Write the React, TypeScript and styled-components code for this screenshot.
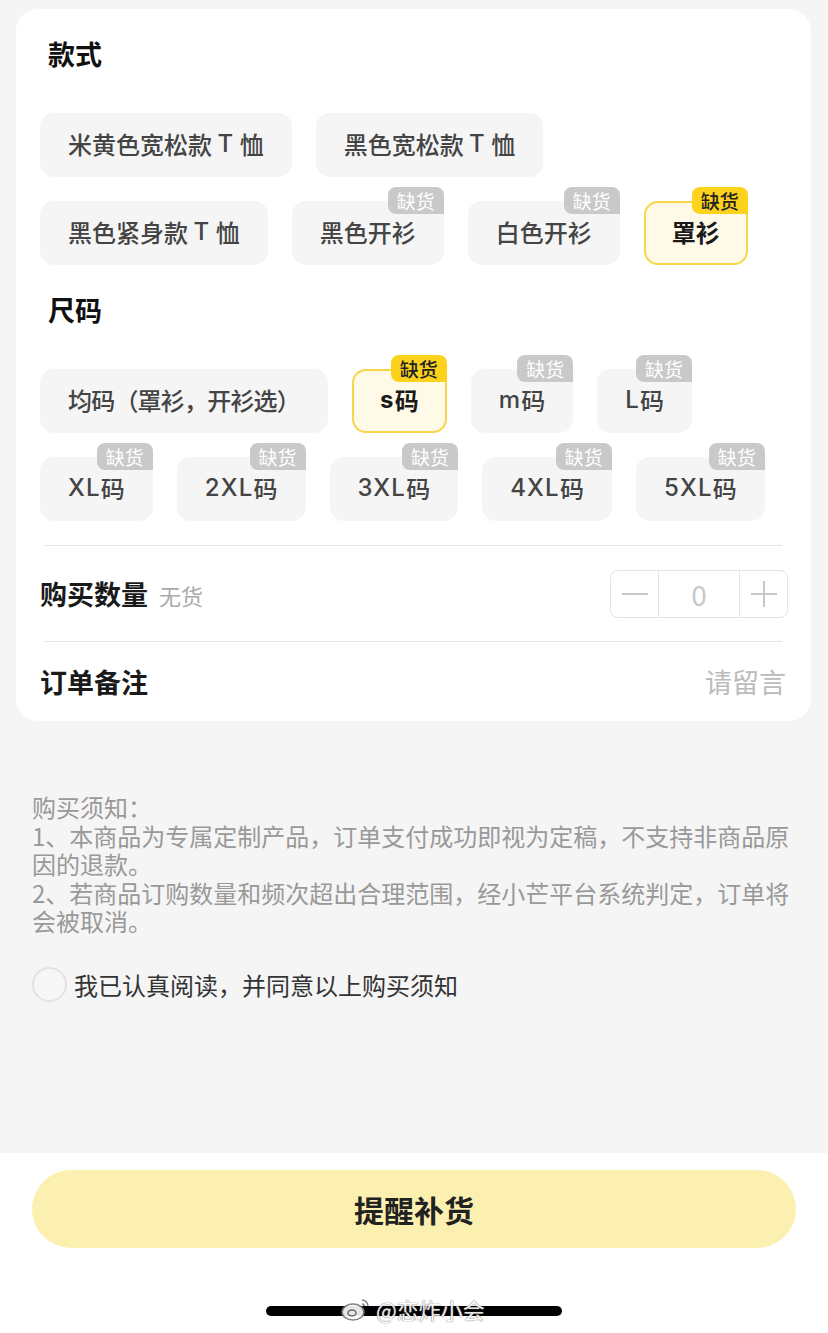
import React from 'react';
import styled, {createGlobalStyle} from 'styled-components';

const GlobalStyle = createGlobalStyle`
  html, body {
    margin: 0;
    padding: 0;
    background: #f5f5f5;
  }
  body {
    font-family: "Noto Sans CJK SC", "Noto Sans", "Liberation Sans", sans-serif;
  }
`;

const Page = styled.div`
  width: 828px;
  height: 1333px;
  display: flex;
  flex-direction: column;
  background: #f5f5f5;
  overflow: hidden;
`;

const Body = styled.div`
  flex: 0 0 1153px;
  padding: 9px 17px 0 16px;
  box-sizing: border-box;
`;

const Card = styled.div`
  background: #fff;
  border-radius: 22px;
  padding: 27px 24px 0;
`;

const SectionTitle = styled.div<{$gap?: number}>`
  margin: ${(p) => p.$gap ?? 0}px 0 0 8px;
  height: 36px;
  line-height: 36px;
  font-size: 27px;
  font-weight: 700;
  color: #111;
`;

const ChipGroup = styled.div`
  display: flex;
  flex-wrap: wrap;
  gap: 24px;
  margin-top: 41px;
`;

const Chip = styled.div<{$selected?: boolean; $tight?: boolean}>`
  position: relative;
  height: 64px;
  padding: 0 26px 3px;
  box-sizing: border-box;
  display: flex;
  align-items: center;
  border-radius: 14px;
  font-size: 24px;
  letter-spacing: ${(p) => (p.$tight ? '-0.8px' : '0')};
  background: ${(p) => (p.$selected ? '#fffae8' : '#f5f5f5')};
  border: 2px solid ${(p) => (p.$selected ? '#f6d64a' : 'transparent')};
  color: ${(p) => (p.$selected ? '#1a1a1a' : '#444')};
  font-weight: ${(p) => (p.$selected ? 700 : 500)};
  white-space: pre;
`;

const Latin = styled.span`
  font-family: Inter, "Noto Sans", sans-serif;
  letter-spacing: 1.2px;
`;

const Badge = styled.span<{$selected?: boolean}>`
  position: absolute;
  top: -16px;
  right: -2px;
  height: 27px;
  line-height: 27px;
  padding: 0 9px;
  border-radius: 8px 8px 0 8px;
  font-size: 19px;
  letter-spacing: 0;
  font-weight: ${(p) => (p.$selected ? 500 : 400)};
  background: ${(p) => (p.$selected ? '#fdd21c' : '#c9c9c9')};
  color: ${(p) => (p.$selected ? '#222' : '#fff')};
`;

const Divider = styled.div<{$top?: number}>`
  height: 1px;
  background: #e6e6e6;
  margin: ${(p) => p.$top ?? 0}px 5px 0 4px;
`;

const FormRow = styled.div<{$height: number}>`
  height: ${(p) => p.$height}px;
  display: flex;
  align-items: center;
  justify-content: space-between;
`;

const RowLabel = styled.div`
  display: flex;
  align-items: baseline;
  gap: 11px;
  font-size: 27px;
  font-weight: 700;
  color: #1a1a1a;
`;

const Hint = styled.span`
  font-size: 22px;
  font-weight: 400;
  color: #aaa;
`;

const Placeholder = styled.span`
  font-size: 27px;
  color: #bbb;
  margin-right: 1px;
`;

const Stepper = styled.div`
  display: flex;
  height: 48px;
  border: 1px solid #e4e4e4;
  border-radius: 8px;
  margin-right: -1px;
  box-sizing: border-box;
`;

const StepCell = styled.div<{$wide?: boolean}>`
  width: ${(p) => (p.$wide ? 80 : 47)}px;
  display: flex;
  align-items: center;
  justify-content: center;
  color: #c8c8c8;
  font-size: 28px;
  & + & {
    border-left: 1px solid #e4e4e4;
  }
`;

const Notice = styled.div`
  margin: 72px 0 0 16px;
  padding-right: 20px;
  font-size: 24px;
  line-height: 28.5px;
  color: #999;
`;

const Agree = styled.div`
  display: flex;
  align-items: center;
  gap: 7px;
  margin: 31px 0 0 16px;
  font-size: 24px;
  color: #333;
`;

const Circle = styled.span`
  width: 31px;
  height: 31px;
  border-radius: 50%;
  border: 2px solid #e2e2e2;
  background: #f7f7f7;
`;

const Footer = styled.div`
  position: relative;
  flex: 1;
  background: #fff;
  display: flex;
  flex-direction: column;
  align-items: center;
  padding-top: 17px;
`;

const ActionButton = styled.div`
  width: 764px;
  height: 78px;
  border-radius: 39px;
  background: #fcf0b0;
  display: flex;
  align-items: center;
  justify-content: center;
  font-size: 30px;
  font-weight: 700;
  color: #222;
`;

const HomeBar = styled.div`
  width: 296px;
  height: 10px;
  border-radius: 5px;
  background: #000;
  margin-top: 58px;
`;

const Watermark = styled.div`
  position: absolute;
  left: 340px;
  top: 140px;
  display: flex;
  align-items: center;
  gap: 4px;
  font-size: 22px;
  color: #fff;
  text-shadow: 0 0 1px #666, 0 0 1px #666;
  opacity: 0.9;
`;

type Opt = {label: string; out?: boolean; selected?: boolean; tight?: boolean};

const styles: Opt[] = [
  {label: '米黄色宽松款 T 恤'},
  {label: '黑色宽松款 T 恤'},
  {label: '黑色紧身款 T 恤'},
  {label: '黑色开衫', out: true},
  {label: '白色开衫', out: true},
  {label: '罩衫', out: true, selected: true},
];

const sizes: Opt[] = [
  {label: '均码（罩衫，开衫选）', tight: true},
  {label: 's码', out: true, selected: true},
  {label: 'm码', out: true},
  {label: 'L码', out: true},
  {label: 'XL码', out: true},
  {label: '2XL码', out: true},
  {label: '3XL码', out: true},
  {label: '4XL码', out: true},
  {label: '5XL码', out: true},
];

// latin runs get a wider face, like the app renders them
const renderLabel = (label: string) =>
  label
    .split(/([A-Za-z0-9]+)/)
    .filter(Boolean)
    .map((part, i) =>
      /^[A-Za-z0-9]+$/.test(part) ? <Latin key={i}>{part}</Latin> : part,
    );

const Options = ({items}: {items: Opt[]}) => (
  <ChipGroup>
    {items.map((it) => (
      <Chip key={it.label} $selected={it.selected} $tight={it.tight}>
        {renderLabel(it.label)}
        {it.out && <Badge $selected={it.selected}>缺货</Badge>}
      </Chip>
    ))}
  </ChipGroup>
);

export default function App() {
  return (
    <Page>
      <GlobalStyle />
      <Body>
        <Card>
          <SectionTitle>款式</SectionTitle>
          <Options items={styles} />
          <SectionTitle $gap={27}>尺码</SectionTitle>
          <Options items={sizes} />
          <Divider $top={24} />
          <FormRow $height={95}>
            <RowLabel>
              购买数量<Hint>无货</Hint>
            </RowLabel>
            <Stepper>
              <StepCell>
                <svg width="28" height="28" viewBox="0 0 28 28">
                  <path d="M1 14h26" stroke="#c8c8c8" strokeWidth="2" />
                </svg>
              </StepCell>
              <StepCell $wide>0</StepCell>
              <StepCell>
                <svg width="28" height="28" viewBox="0 0 28 28">
                  <path d="M1 14h26M14 1v26" stroke="#c8c8c8" strokeWidth="2" />
                </svg>
              </StepCell>
            </Stepper>
          </FormRow>
          <Divider />
          <FormRow $height={79}>
            <RowLabel>订单备注</RowLabel>
            <Placeholder>请留言</Placeholder>
          </FormRow>
        </Card>
        <Notice>
          购买须知：
          <br />
          1、本商品为专属定制产品，订单支付成功即视为定稿，不支持非商品原因的退款。
          <br />
          2、若商品订购数量和频次超出合理范围，经小芒平台系统判定，订单将会被取消。
        </Notice>
        <Agree>
          <Circle />
          我已认真阅读，并同意以上购买须知
        </Agree>
      </Body>
      <Footer>
        <ActionButton>提醒补货</ActionButton>
        <HomeBar />
        <Watermark>
          <svg width="32" height="26" viewBox="0 0 32 26">
            <ellipse cx="13" cy="16" rx="11" ry="8" fill="#fff" stroke="#777" strokeWidth="1.5" />
            <ellipse cx="12" cy="17" rx="4" ry="3" fill="none" stroke="#777" strokeWidth="1.5" />
            <path d="M22 4a6 6 0 0 1 6 6M22 8a2 2 0 0 1 2 2" fill="none" stroke="#777" strokeWidth="1.5" />
          </svg>
          @恋炸小会
        </Watermark>
      </Footer>
    </Page>
  );
}
